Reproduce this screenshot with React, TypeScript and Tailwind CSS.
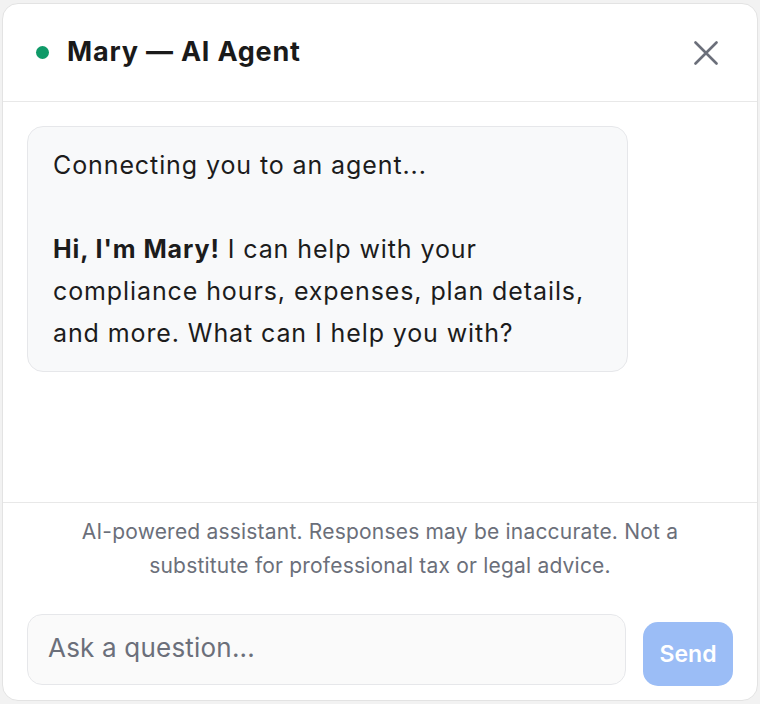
export default function App() {
  return (
    <div
      className="min-h-[704px] w-[760px] bg-[#f2f2f2] px-[2px] pt-[3px]"
      style={{ fontFamily: "Inter, 'Noto Sans', sans-serif" }}
    >
      <div className="flex h-[698px] flex-col overflow-hidden rounded-[16px] border border-[#e3e3e3] bg-white">
        {/* Header */}
        <div className="flex h-[98px] shrink-0 items-center justify-between border-b border-[#e8e8e8] pl-[33px] pr-[39px]">
          <div className="flex items-center gap-[18px]">
            <span className="h-[13px] w-[13px] rounded-full bg-[#0f9a68]" />
            <h2 className="text-[27px] font-bold tracking-[0.8px] text-[#1a1a1a]">
              Mary — AI Agent
            </h2>
          </div>
          <button className="text-[#6b6f7a]">
            <svg width="24" height="24" viewBox="0 0 24 24" fill="none">
              <path
                d="M1.5 1.5L22.5 22.5M22.5 1.5L1.5 22.5"
                stroke="currentColor"
                strokeWidth="2.6"
                strokeLinecap="round"
              />
            </svg>
          </button>
        </div>

        {/* Messages */}
        <div className="flex-1 px-[24px] pt-[24px]">
          <div className="w-[601px] rounded-[16px] border border-[#e6e7ea] bg-[#f8f9fa] px-[25px] py-[17px] text-[25px] leading-[42px] tracking-[0.9px] text-[#1c1c1c]">
            <p>Connecting you to an agent...</p>
            <p className="h-[42px]" />
            <p>
              <span className="font-bold">Hi, I'm Mary!</span> I can help with your
              <br />
              compliance hours, expenses, plan details,
              <br />
              and more. What can I help you with?
            </p>
          </div>
        </div>

        {/* Footer */}
        <div className="shrink-0 border-t border-[#e8e8e8] px-[24px] pb-[15px] pt-[12px]">
          <p className="text-center text-[21px] leading-[34px] tracking-[0.2px] text-[#6b6f7a]">
            AI-powered assistant. Responses may be inaccurate. Not a
            <br />
            substitute for professional tax or legal advice.
          </p>
          <div className="mt-[31px] flex items-end gap-[17px]">
            <div className="flex h-[71px] flex-1 items-center rounded-[15px] border border-[#e6e7ea] bg-[#fafafa] px-[20px] pb-[4px]">
              <input
                placeholder="Ask a question..."
                className="w-full bg-transparent text-[26px] tracking-[0.2px] text-[#1c1c1c] outline-none placeholder:text-[#6b6f7a]"
              />
            </div>
            <button className="mb-[-1px] h-[64px] w-[90px] rounded-[15px] bg-[#9bbdf6] text-[23px] font-semibold text-white">
              Send
            </button>
          </div>
        </div>
      </div>
    </div>
  );
}
